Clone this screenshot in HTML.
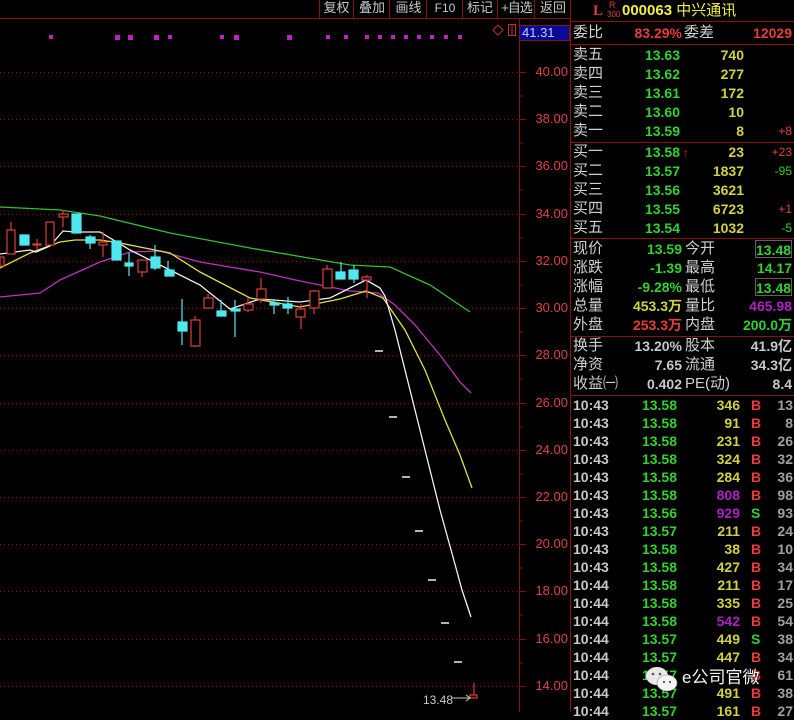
<!DOCTYPE html>
<html><head><meta charset="utf-8"><style>
*{margin:0;padding:0;box-sizing:border-box}
body{width:794px;height:712px;background:#000;position:relative;overflow:hidden;font-family:"Liberation Sans","Noto Sans CJK SC",sans-serif;}
.t{position:absolute;white-space:nowrap;line-height:18px;height:18px}
.cj{font-size:15px;color:#d0d0d0}
.n{font-size:14px;font-weight:bold}
.r{text-align:right}
.g{color:#2fd22f}.y{color:#d2d240}.rd{color:#e83c3c}.w{color:#c8c8c8}.m{color:#b020c0}
.tb{position:absolute;top:0;height:18px;font-size:13px;color:#c8c8c8;line-height:16px;text-align:center;border-right:1px solid #8a1010;white-space:nowrap;overflow:hidden}
</style></head><body>
<svg width="794" height="712" style="position:absolute;left:0;top:0">
<g stroke="#8a1010" stroke-width="1">
<line x1="0" y1="18.5" x2="570" y2="18.5"/>
<line x1="519.5" y1="18" x2="519.5" y2="712"/>
<line x1="570.5" y1="0" x2="570.5" y2="712"/>
<line x1="570" y1="21.5" x2="794" y2="21.5"/>
<line x1="570" y1="44.5" x2="794" y2="44.5"/>
<line x1="570" y1="142.5" x2="794" y2="142.5"/>
<line x1="570" y1="238.5" x2="794" y2="238.5"/>
<line x1="570" y1="336.5" x2="794" y2="336.5"/>
<line x1="570" y1="395.5" x2="794" y2="395.5"/>
</g>
<g stroke="#8a1010" stroke-dasharray="1,3">
<line x1="0" y1="72.5" x2="519" y2="72.5"/><line x1="0" y1="119.5" x2="519" y2="119.5"/>
<line x1="0" y1="166.5" x2="519" y2="166.5"/><line x1="0" y1="214.5" x2="519" y2="214.5"/>
<line x1="0" y1="261.5" x2="519" y2="261.5"/><line x1="0" y1="308.5" x2="519" y2="308.5"/>
<line x1="0" y1="355.5" x2="519" y2="355.5"/><line x1="0" y1="403.5" x2="519" y2="403.5"/>
<line x1="0" y1="450.5" x2="519" y2="450.5"/><line x1="0" y1="497.5" x2="519" y2="497.5"/>
<line x1="0" y1="544.5" x2="519" y2="544.5"/><line x1="0" y1="591.5" x2="519" y2="591.5"/>
<line x1="0" y1="639.5" x2="519" y2="639.5"/><line x1="0" y1="686.5" x2="519" y2="686.5"/>
</g>
<g stroke="#8a1010">
<path d="M519 72.5h7M519 96h4M519 119.5h7M519 143h4M519 166.5h7M519 190h4M519 214.5h7M519 238h4M519 261.5h7M519 285h4M519 308.5h7M519 332h4M519 355.5h7M519 379h4M519 403.5h7M519 427h4M519 450.5h7M519 474h4M519 497.5h7M519 521h4M519 544.5h7M519 568h4M519 591.5h7M519 615h4M519 639.5h7M519 663h4M519 686.5h7"/>
</g>
<g fill="#c020c0">
<rect x="49" y="35" width="4" height="4"/><rect x="115" y="35" width="5" height="5"/><rect x="128" y="35" width="5" height="5"/><rect x="154" y="35" width="5" height="5"/><rect x="168" y="35" width="4" height="4"/><rect x="220" y="35" width="4" height="4"/><rect x="234" y="35" width="5" height="5"/><rect x="287" y="35" width="5" height="5"/><rect x="326" y="35" width="4" height="4"/><rect x="344" y="35" width="4" height="4"/><rect x="365" y="35" width="4" height="4"/><rect x="378" y="35" width="4" height="4"/><rect x="391" y="35" width="4" height="4"/><rect x="404" y="35" width="4" height="4"/><rect x="417" y="35" width="4" height="4"/><rect x="430" y="35" width="4" height="4"/><rect x="444" y="35" width="4" height="4"/><rect x="458" y="35" width="4" height="4"/>
</g>
<path d="M498 25l5 5-5 5-5-5z" fill="none" stroke="#c03030"/>
<rect x="508.5" y="24.5" width="7" height="11" fill="none" stroke="#c03030"/><line x1="512" y1="25" x2="512" y2="35" stroke="#c03030"/>
<rect x="519.5" y="25.5" width="50" height="15" fill="#0a0a9a" stroke="#8a1010"/>
<g fill="none" stroke-width="1.3">
<polyline stroke="#30c030" points="0,207 60,210 100,216 170,233 250,248 350,265 390,267 430,285 470,312"/>
<polyline stroke="#c030c0" points="0,297 20,295 40,293 60,280 100,262 130,252 160,251 200,262 260,272 300,281 350,291 378,293 395,305 415,325 440,355 460,382 471,393"/>
<polyline stroke="#e0e040" points="0,268 30,253 60,242 75,240 100,240 120,243 170,253 200,272 250,298 300,307 340,299 366,291 383,298 405,330 425,370 445,420 460,455 472,488"/>
<polyline stroke="#f0f0f0" points="0,254 30,250 36,252 50,246 63,231 75,232 100,232 130,250 160,265 200,285 230,309 260,299 300,302 330,298 366,280 380,288 385,296 395,330 405,370 415,410 425,450 440,510 453,557 462,590 471,617"/>
</g>
<g stroke="#e03c3c" fill="#000" stroke-width="1.2">
<path d="M11 222v32M37 239v11M63 210v17M103 232v25M142 272v5M195 316v31M208 294v14M248 298v14M261 278v25M301 304v25M314 290v24M327 265v23M367 275v23M474 683v15"/>
<rect x="0" y="257" width="4" height="9"/><rect x="7" y="230" width="8" height="24"/><rect x="33" y="244" width="8" height="1"/><rect x="46" y="222" width="8" height="23"/><rect x="59" y="214" width="9" height="3"/><rect x="99" y="242" width="8" height="3"/><rect x="138" y="260" width="9" height="12"/><rect x="191" y="320" width="9" height="26"/><rect x="204" y="298" width="9" height="10"/><rect x="244" y="304" width="9" height="6"/><rect x="257" y="289" width="9" height="10"/><rect x="296" y="309" width="9" height="8"/><rect x="310" y="291" width="9" height="17"/><rect x="323" y="269" width="9" height="19"/><rect x="362" y="277" width="9" height="3"/><rect x="470" y="695" width="7" height="3"/>
</g>
<g stroke="#50e8f0" fill="#50e8f0" stroke-width="1.2">
<path d="M90 235v14M129 253v23M155 245v25M168 261v15M182 299v46M221 300v16M235 300v37M274 299v15M288 297v17M341 262v17M354 265v18"/>
<rect x="20" y="235" width="9" height="10"/><rect x="72" y="214" width="9" height="19"/><rect x="86" y="237" width="9" height="6"/><rect x="112" y="241" width="9" height="19"/><rect x="125" y="263" width="8" height="3"/><rect x="151" y="257" width="9" height="11"/><rect x="165" y="270" width="9" height="6"/><rect x="178" y="322" width="9" height="9"/><rect x="217" y="311" width="9" height="5"/><rect x="231" y="309" width="9" height="2"/><rect x="270" y="303" width="9" height="2"/><rect x="283" y="304" width="9" height="4"/><rect x="336" y="272" width="9" height="7"/><rect x="349" y="270" width="9" height="9"/>
</g>
<g stroke="#f0f0f0" stroke-width="1.5">
<path d="M375 351h8M389 417h8M402 477h8M415 531h8M428 580h8M441 623h8M454 662h8"/>
</g>
<path d="M452 698h18M466 695l4 3-4 3" stroke="#c8c8c8" fill="none"/>
</svg>
<div class="tb" style="left:319px;width:35px;border-left:1px solid #8a1010">复权</div>
<div class="tb" style="left:355px;width:35px">叠加</div>
<div class="tb" style="left:391px;width:36px">画线</div>
<div class="tb" style="left:428px;width:35px;font-size:12px">F10</div>
<div class="tb" style="left:463px;width:35px">标记</div>
<div class="tb" style="left:499px;width:36px;letter-spacing:-1px">+自选</div>
<div class="tb" style="left:536px;width:34px;border-right:none">返回</div>
<div class="t" style="left:522px;top:24px;font-size:13px;color:#c8c8ff">41.31</div>
<div class="t" style="left:423px;top:691px;font-size:12px;color:#c8c8c8">13.48</div>
<div style="position:absolute;left:524px;top:0;width:44px;font-size:13px;color:#e04040;text-align:right">
<div class="t r" style="top:63px;width:44px">40.00</div><div class="t r" style="top:110px;width:44px">38.00</div><div class="t r" style="top:157px;width:44px">36.00</div><div class="t r" style="top:205px;width:44px">34.00</div><div class="t r" style="top:252px;width:44px">32.00</div><div class="t r" style="top:299px;width:44px">30.00</div><div class="t r" style="top:346px;width:44px">28.00</div><div class="t r" style="top:394px;width:44px">26.00</div><div class="t r" style="top:441px;width:44px">24.00</div><div class="t r" style="top:488px;width:44px">22.00</div><div class="t r" style="top:535px;width:44px">20.00</div><div class="t r" style="top:582px;width:44px">18.00</div><div class="t r" style="top:630px;width:44px">16.00</div><div class="t r" style="top:677px;width:44px">14.00</div>
</div>
<div class="t" style="left:593px;top:2px;font-size:15px;font-weight:bold;color:#e03c3c;font-family:'Liberation Serif',serif">L</div>
<div class="t" style="left:609px;top:-4px;font-size:9px;color:#e03c3c">R</div>
<div class="t" style="left:607px;top:6px;font-size:8px;color:#e03c3c">300</div>
<div class="t" style="left:622px;top:2px;font-size:15px;color:#f0f040"><b>000063</b> 中兴通讯</div>
<div class="t cj" style="left:573px;top:24px">委比</div>
<div class="t n rd r" style="left:600px;top:24px;width:82px">83.29%</div>
<div class="t cj" style="left:684px;top:24px">委差</div>
<div class="t n rd r" style="left:740px;top:24px;width:52px">12029</div>
<div id="ob"></div>
<script>
var h='';
function row(y,a,b,c,d,dc){h+='<div class="t cj" style="left:573px;top:'+y+'px">'+a+'</div><div class="t n g r" style="left:620px;top:'+y+'px;width:60px">'+b+'</div><div class="t n y r" style="left:690px;top:'+y+'px;width:54px">'+c+'</div>'+(d?'<div class="t r '+dc+'" style="left:750px;top:'+y+'px;width:42px;font-size:12px">'+d+'</div>':'');}
row(46,'卖五','13.63','740');row(65,'卖四','13.62','277');row(84,'卖三','13.61','172');row(103,'卖二','13.60','10');row(122,'卖一','13.59','8','+8','rd');
row(143,'买一','13.58','23','+23','rd');row(162,'买二','13.57','1837','-95','g');row(181,'买三','13.56','3621');row(200,'买四','13.55','6723','+1','rd');row(219,'买五','13.54','1032','-5','g');
h+='<div class="t" style="left:683px;top:144px;color:#ff2020;font-size:12px;font-weight:bold">↑</div>';
function q(y,a,b,bc,c,d,dc,box){h+='<div class="t cj" style="left:573px;top:'+y+'px">'+a+'</div><div class="t n r '+bc+'" style="left:600px;top:'+y+'px;width:82px">'+b+'</div><div class="t cj" style="left:685px;top:'+y+'px">'+c+'</div><div class="t n r '+dc+'" style="left:730px;top:'+y+'px;width:62px;'+(box?'border:1px solid #606060;height:18px;left:755px;width:37px;padding-right:1px':'')+'">'+d+'</div>';}
q(240,'现价','13.59','g','今开','13.48','g',1);q(259,'涨跌','-1.39','g','最高','14.17','g');q(278,'涨幅','-9.28%','g','最低','13.48','g',1);q(297,'总量','453.3万','y','量比','465.98','m');q(316,'外盘','253.3万','rd','内盘','200.0万','g');
q(337,'换手','13.20%','w','股本','41.9亿','w');q(356,'净资','7.65','w','流通','34.3亿','w');q(375,'收益㈠','0.402','w','PE(动)','8.4','w');
var tr=[['10:43','13.58','346','B','13'],['10:43','13.58','91','B','8'],['10:43','13.58','231','B','26'],['10:43','13.58','324','B','32'],['10:43','13.58','284','B','36'],['10:43','13.58','808','B','98'],['10:43','13.56','929','S','93'],['10:43','13.57','211','B','24'],['10:43','13.58','38','B','10'],['10:43','13.58','427','B','34'],['10:44','13.58','211','B','17'],['10:44','13.58','335','B','25'],['10:44','13.58','542','B','54'],['10:44','13.57','449','S','38'],['10:44','13.57','447','B','34'],['10:44','13.57','','B','61'],['10:44','13.57','491','B','38'],['10:44','13.57','161','B','27']];
for(var i=0;i<tr.length;i++){var y=396+i*18,r=tr[i];var vc=(+r[2]>=500)?'m':'y';
h+='<div class="t n w" style="left:573px;top:'+y+'px">'+r[0]+'</div><div class="t n g r" style="left:620px;top:'+y+'px;width:57px">'+r[1]+'</div><div class="t n r '+vc+'" style="left:700px;top:'+y+'px;width:40px">'+r[2]+'</div><div class="t n '+(r[3]=='S'?'g':'rd')+'" style="left:751px;top:'+y+'px">'+r[3]+'</div><div class="t n r" style="left:765px;top:'+y+'px;width:28px;color:#a0a0a0">'+r[4]+'</div>';}
document.getElementById('ob').innerHTML=h;
</script>
<svg width="40" height="30" style="position:absolute;left:643px;top:664px"><ellipse cx="14" cy="12" rx="11" ry="9" fill="#e8e8e8"/><ellipse cx="24" cy="19" rx="10" ry="8" fill="#f4f4f4" stroke="#999" stroke-width="0.6"/><circle cx="10" cy="10" r="1.3" fill="#555"/><circle cx="17" cy="10" r="1.3" fill="#555"/><circle cx="21" cy="18" r="1.1" fill="#555"/><circle cx="27" cy="18" r="1.1" fill="#555"/></svg>
<div class="t" style="left:682px;top:666px;font-size:17px;color:#f4f4f4;height:24px;line-height:24px;text-shadow:0 0 2px #000">e公司官微</div>
</body></html>
